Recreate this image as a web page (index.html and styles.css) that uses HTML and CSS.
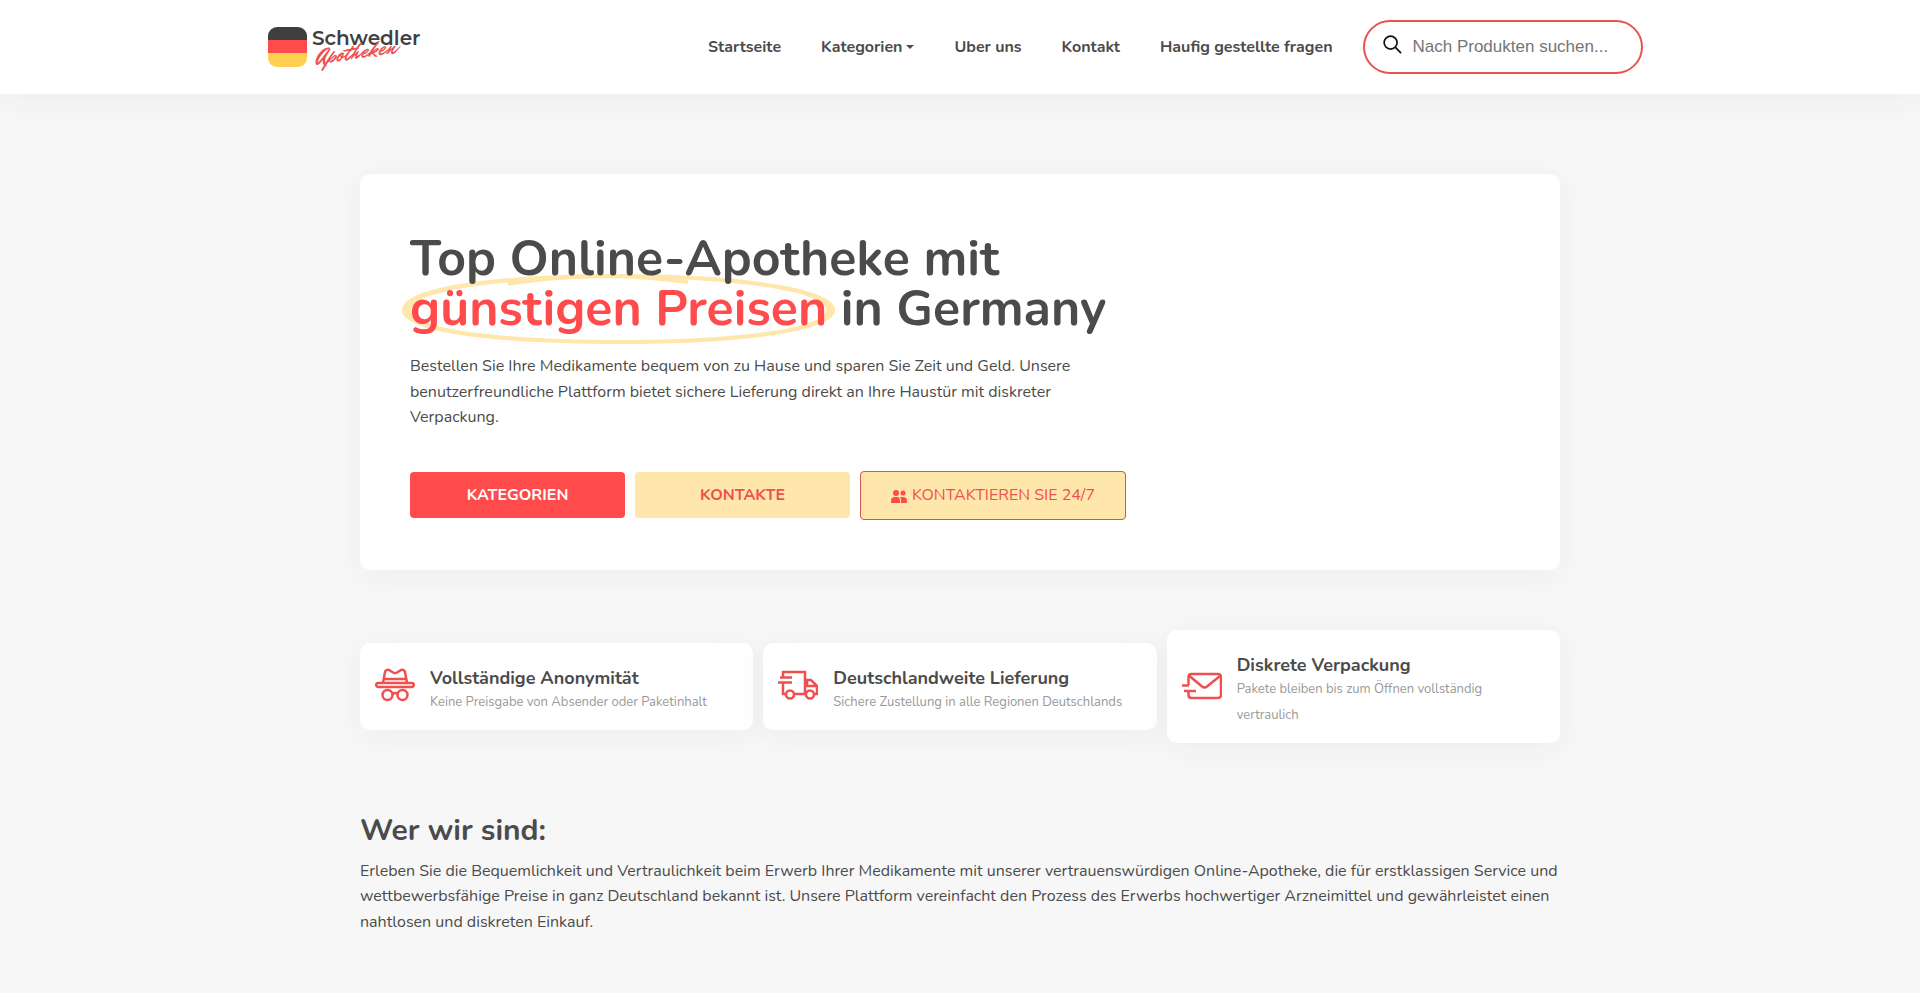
FILE: index.html
```html
<!DOCTYPE html>
<html lang="de">
<head>
    <meta charset="utf-8">
    <meta name="viewport" content="width=device-width, initial-scale=1">
    <title>Schwedler Apotheken</title>
    <link rel="stylesheet" href="styles.css">
</head>
<body>
<header class="header">
    <div class="header-inner">
        <a class="logo" href="#" aria-label="Schwedler Apotheken">
            <svg width="154" height="46" viewBox="0 0 154 46">
                <clipPath id="flag"><rect y="3" width="39" height="40" rx="9"/></clipPath>
                <g clip-path="url(#flag)">
                    <rect y="3" width="39" height="14" fill="#3f3f3f"/>
                    <rect y="16" width="39" height="14" fill="#ff4b4b"/>
                    <rect y="29" width="39" height="14" fill="#ffcf52"/>
                </g>
                <text class="logo-name" x="44" y="21">Schwedler</text>
                <text class="logo-sub" x="49" y="40" transform="rotate(-8 49 40)">Apotheken</text>
            </svg>
        </a>
        <nav class="nav">
            <a href="#">Startseite</a>
            <a class="dropdown" href="#">Kategorien</a>
            <a href="#">Uber uns</a>
            <a href="#">Kontakt</a>
            <a href="#">Haufig gestellte fragen</a>
        </nav>
        <form class="search">
            <label for="search" aria-label="Suche">
                <svg width="19" height="19" viewBox="0 0 20 20" fill="none" stroke="#111" stroke-width="1.8">
                    <circle cx="8" cy="8" r="6.8"/>
                    <path d="M12.8 12.8L19 19"/>
                </svg>
            </label>
            <input id="search" type="text" placeholder="Nach Produkten suchen...">
        </form>
    </div>
</header>

<main class="container">
    <section class="hero">
        <h1>Top Online-Apotheke mit<br>
            <span class="marked">günstigen Preisen<svg viewBox="0 0 433 70" preserveAspectRatio="none">
                <path fill="#ffe6aa" fill-rule="evenodd" d="M0 36C0 12 100 0 216 0C333 0 433 13 433 36C433 59 330 70 220 70C100 70 0 60 0 36ZM9 36C9 56 105 66 220 66C330 66 424 55 424 36C424 17 330 4 216 4C105 4 9 16 9 36Z"/>
                <path fill="none" stroke="#ffe6aa" stroke-width="4" d="M106 10C140 4 175 2 216 2C242 3 264 5 286 8"/>
            </svg></span> in Germany</h1>
        <p>Bestellen Sie Ihre Medikamente bequem von zu Hause und sparen Sie Zeit und Geld. Unsere benutzerfreundliche Plattform bietet sichere Lieferung direkt an Ihre Haustür mit diskreter Verpackung.</p>
        <div class="buttons">
            <a class="btn btn-red" href="#">KATEGORIEN</a>
            <a class="btn btn-yellow" href="#">KONTAKTE</a>
            <button class="btn-contact" type="button">
                <svg width="16" height="16" viewBox="0 0 16 16" fill="#ff4b4b">
                    <circle cx="5" cy="5" r="3"/>
                    <circle cx="12" cy="5" r="2.5"/>
                    <path d="M0 15V13Q0 9 4 9H6Q9 9 9 13V15ZM10 15V12Q10 10 9 9H12Q16 9 16 13V15Z"/>
                </svg>
                KONTAKTIEREN SIE 24/7
            </button>
        </div>
    </section>

    <section class="features">
        <div class="feature">
            <svg width="40" height="40" viewBox="0 0 40 40" fill="none" stroke="#f04f4f" stroke-width="2.5" stroke-linejoin="round">
                <rect x="1.2" y="17" width="37.6" height="4" rx="2"/>
                <path d="M8 17L10 6Q11 3 14 4L18 6.5Q20 7.5 22 6.5L26 4Q29 3 30 6L32 17M9 13H31"/>
                <circle cx="12.5" cy="29" r="5"/>
                <circle cx="27.5" cy="29" r="5"/>
                <path d="M17.5 28Q20 26 22.5 28"/>
            </svg>
            <div class="feature-text">
                <h3>Vollständige Anonymität</h3>
                <p>Keine Preisgabe von Absender oder Paketinhalt</p>
            </div>
        </div>
        <div class="feature">
            <svg width="40" height="40" viewBox="0 0 40 40" fill="none" stroke="#f04f4f" stroke-width="2.5">
                <path d="M5 12V6H27V29M5 17V28H8M16 28H28M36 28H39V20L33 14H27M29 14V20H39M2 11.5H14M0 16.5H14"/>
                <circle cx="12" cy="28.5" r="4"/>
                <circle cx="32" cy="28.5" r="4"/>
            </svg>
            <div class="feature-text">
                <h3>Deutschlandweite Lieferung</h3>
                <p>Sichere Zustellung in alle Regionen Deutschlands</p>
            </div>
        </div>
        <div class="feature">
            <svg width="40" height="40" viewBox="0 0 40 40" fill="none" stroke="#f04f4f" stroke-width="2.5" stroke-linejoin="round">
                <path d="M6.5 19V11Q6.5 8 9.5 8H36Q39 8 39 11V29Q39 32 36 32H9.5Q6.5 32 6.5 29V26M7.5 10L20 20.5Q22.5 22.5 25 20.5L38 10"/>
                <path d="M0 19.5H7M2 25H14"/>
            </svg>
            <div class="feature-text">
                <h3>Diskrete Verpackung</h3>
                <p>Pakete bleiben bis zum Öffnen vollständig vertraulich</p>
            </div>
        </div>
    </section>

    <section class="about">
        <h2>Wer wir sind:</h2>
        <p>Erleben Sie die Bequemlichkeit und Vertraulichkeit beim Erwerb Ihrer Medikamente mit unserer vertrauenswürdigen Online-Apotheke, die für erstklassigen Service und wettbewerbsfähige Preise in ganz Deutschland bekannt ist. Unsere Plattform vereinfacht den Prozess des Erwerbs hochwertiger Arzneimittel und gewährleistet einen nahtlosen und diskreten Einkauf.</p>
    </section>
</main>
</body>
</html>
```
FILE: styles.css
```css
* {
    box-sizing: border-box;
}

body {
    margin: 0;
    background: #f7f7f7;
    color: #4b4b4b;
    font-family: 'Nunito', 'Open Sans', sans-serif;
    font-size: 16px;
    line-height: 1.6;
}

h1, h2, h3, p {
    margin: 0;
}

a {
    color: inherit;
    text-decoration: none;
}

.header {
    background: #fff;
    box-shadow: 0 5px 30px rgba(0, 51, 51, 0.05);
}

.header-inner {
    display: flex;
    align-items: center;
    max-width: 1405px;
    margin: 0 auto;
    padding: 20px 20px 20px 10px;
}

.logo svg {
    display: block;
    overflow: visible;
}

.logo-name {
    font: 600 20px 'Montserrat', 'Inter', sans-serif;
    fill: #3f3f3f;
}

.logo-sub {
    font: 400 23px 'Mr Dafoe', 'Yellowtail', 'Dancing Script', 'Caveat', cursive;
    fill: #f04f4f;
}

.nav {
    display: flex;
    gap: 40px;
    margin-left: auto;
    padding-top: 2px;
    font-weight: 700;
    white-space: nowrap;
}

.dropdown::after {
    content: '';
    display: inline-block;
    margin-left: 4px;
    vertical-align: 3px;
    border: 4px solid transparent;
    border-top-color: currentColor;
    border-bottom: 0;
}

.search {
    display: flex;
    align-items: center;
    gap: 11px;
    width: 280px;
    height: 54px;
    margin-left: 30px;
    padding: 0 18px;
    border: 2px solid #e9524f;
    border-radius: 27px;
}

.search svg {
    display: block;
    margin-bottom: 5px;
}

.search input {
    flex: 1;
    min-width: 0;
    padding: 0;
    border: 0;
    outline: 0;
    background: none;
    font: 17px 'Liberation Sans', sans-serif;
}

.search input::placeholder {
    color: #757575;
}

.container {
    max-width: 1200px;
    margin: 0 auto;
    padding: 80px 0 60px;
}

.hero {
    padding: 60px 50px 50px;
    background: #fff;
    border-radius: 10px;
    box-shadow: 0 5px 30px rgba(0, 51, 51, 0.05);
}

.hero h1 {
    position: relative;
    z-index: 0;
    margin-bottom: 20px;
    font-size: 50px;
    font-weight: 700;
    line-height: 50px;
    white-space: nowrap;
}

.marked {
    position: relative;
    color: #ff4b4b;
}

/* hand-drawn ring around the highlighted words */
.marked svg {
    position: absolute;
    z-index: -1;
    left: -8px;
    top: 0;
    width: calc(100% + 16px);
    height: 70px;
}

.hero p {
    max-width: 700px;
}

.buttons {
    display: flex;
    align-items: center;
    gap: 10px;
    margin-top: 40px;
}

.btn {
    width: 215px;
    padding: 11px 10px 9px;
    border-radius: 4px;
    font-weight: 700;
    text-align: center;
}

.btn-red {
    background: #ff4b4b;
    color: #fff;
}

.btn-yellow {
    background: #ffe6aa;
    color: #f04f4f;
}

.btn-contact {
    display: flex;
    align-items: center;
    justify-content: center;
    gap: 5px;
    width: 266px;
    height: 49px;
    padding: 1px 0 0;
    border: 1px solid #d9534f;
    border-radius: 4px;
    background: #ffe6aa;
    color: #f04f4f;
    font: inherit;
    white-space: nowrap;
}

.features {
    display: grid;
    grid-template-columns: repeat(3, 1fr);
    align-items: center;
    gap: 10px;
    margin-top: 60px;
}

.feature {
    display: flex;
    align-items: center;
    gap: 15px;
    padding: 15px;
    background: #fff;
    border-radius: 10px;
    box-shadow: 0 5px 30px rgba(0, 51, 51, 0.05);
}

.feature svg {
    flex: none;
}

.feature-text {
    padding-top: 10px;
}

.feature h3 {
    font-size: 18px;
    line-height: 21px;
}

.feature p {
    color: #999;
    font-size: 13px;
    line-height: 26px;
}

.about {
    margin-top: 60px;
}

.about h2 {
    font-size: 30px;
    line-height: 56px;
}
```
